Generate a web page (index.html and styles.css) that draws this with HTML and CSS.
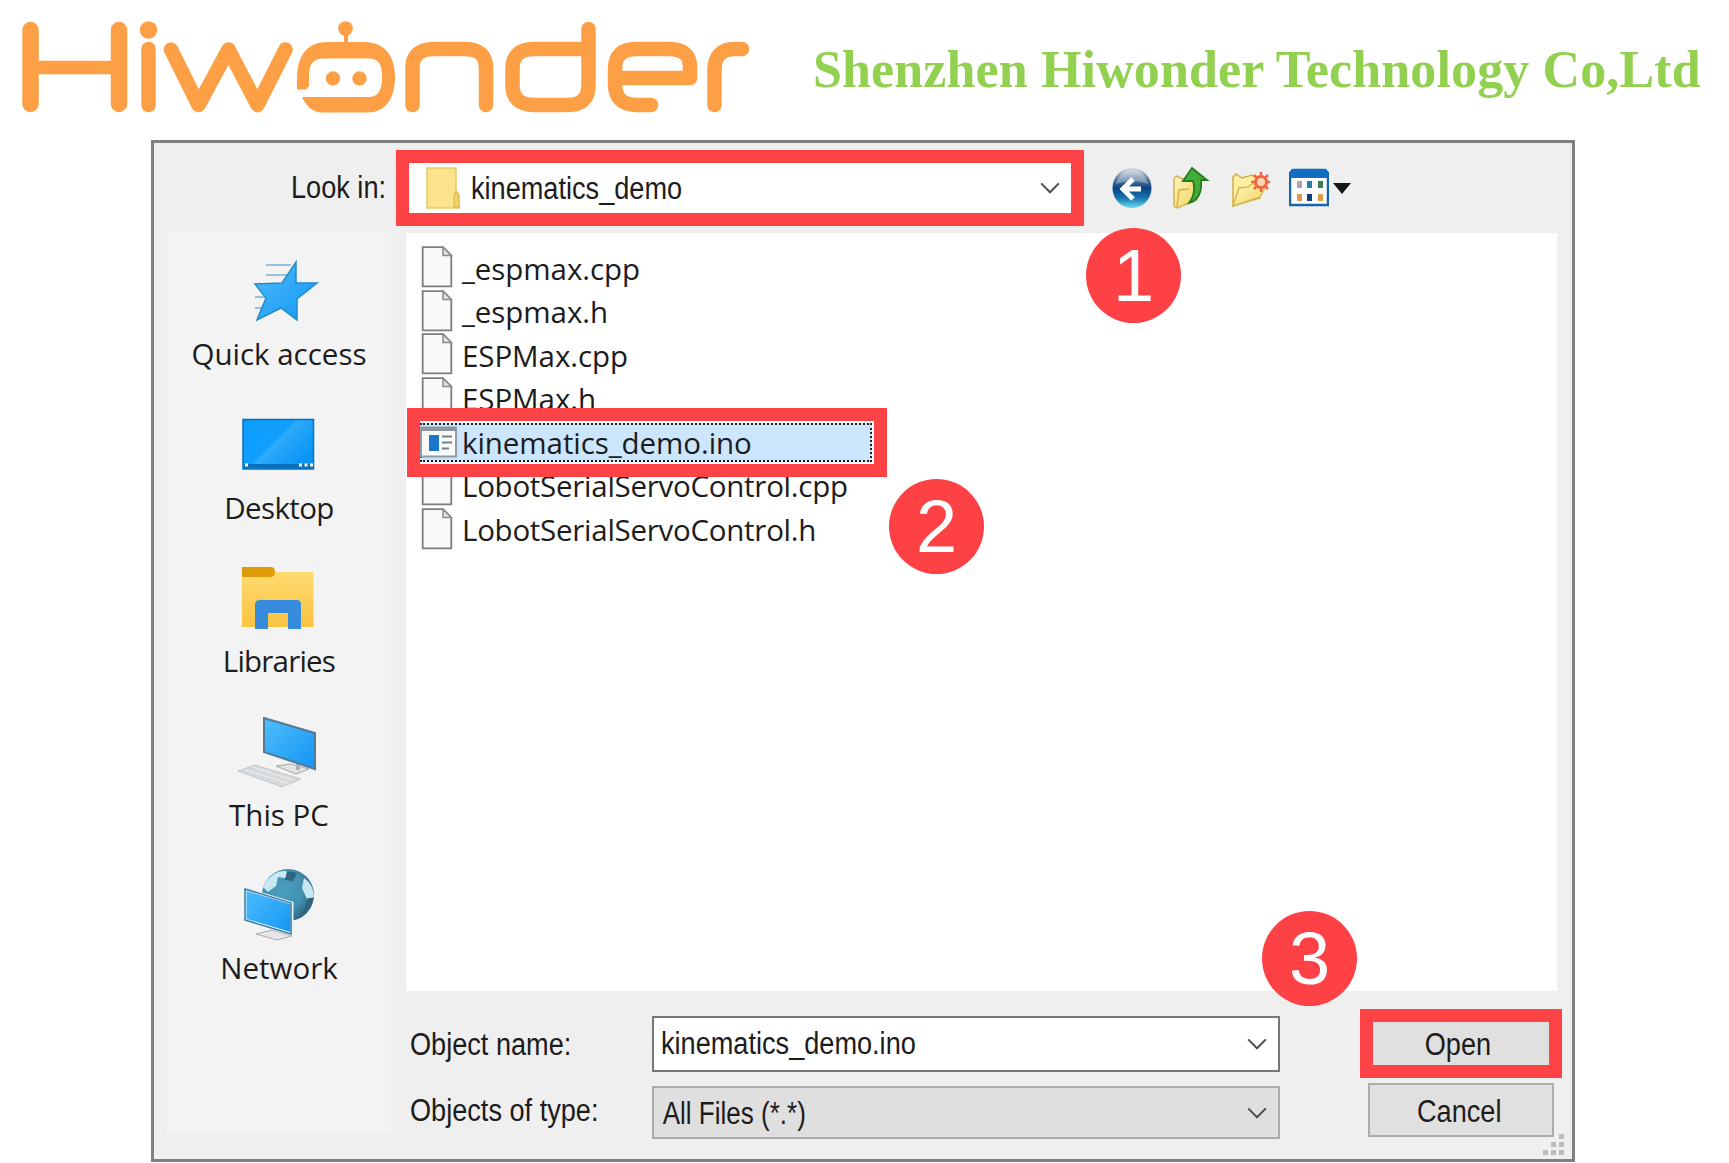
FILE: index.html
```html
<!DOCTYPE html>
<html lang="en">
<head>
<meta charset="utf-8">
<title>Hiwonder - Open sketch</title>
<link rel="stylesheet" href="styles.css">
</head>
<body>
<svg class="defs" width="0" height="0">
  <defs>
    <linearGradient id="blue" x1="0" y1="0" x2="1" y2="1">
      <stop offset="0" stop-color="#50bdfd"/><stop offset="1" stop-color="#1295f2"/>
    </linearGradient>
    <linearGradient id="desk" x1="0" y1="0" x2="1" y2="0.7">
      <stop offset="0" stop-color="#0c9dfa"/><stop offset="0.5" stop-color="#109fff"/><stop offset="0.52" stop-color="#2eabfd"/><stop offset="1" stop-color="#0794f4"/>
    </linearGradient>
    <linearGradient id="gold" x1="0" y1="0" x2="0" y2="1">
      <stop offset="0" stop-color="#ffda70"/><stop offset="1" stop-color="#fac341"/>
    </linearGradient>
    <linearGradient id="paper" x1="0" y1="0" x2="1" y2="1">
      <stop offset="0" stop-color="#fff6bd"/><stop offset="1" stop-color="#f2d45c"/>
    </linearGradient>
    <linearGradient id="ball" x1="0" y1="0" x2="0" y2="1">
      <stop offset="0" stop-color="#d3dce4"/><stop offset="0.3" stop-color="#55779b"/><stop offset="0.5" stop-color="#0c4484"/><stop offset="0.75" stop-color="#1674ad"/><stop offset="1" stop-color="#6fe0f5"/>
    </linearGradient>
    <radialGradient id="globe" cx="0.4" cy="0.4" r="0.65">
      <stop offset="0" stop-color="#4a9fc0"/><stop offset="0.6" stop-color="#4390b0"/><stop offset="1" stop-color="#2d627f"/>
    </radialGradient>
    <symbol id="file" viewBox="0 0 32 42">
      <path d="M1.7 1.2H22L30.3 9.5V40.3H1.7Z" fill="#f9f9f9" stroke="#7d7d7d" stroke-width="1.8"/>
      <path d="M22 1.2V9.5H30.3Z" fill="#e2e2e2" stroke="#8b8b8b" stroke-width="1.5"/>
    </symbol>
    <symbol id="chevron" viewBox="0 0 22 14">
      <path d="M1.5 1.5L11 11L20.5 1.5" fill="none" stroke="#505050" stroke-width="2.2"/>
    </symbol>
  </defs>
</svg>

<header class="brand">
  <svg class="logo" viewBox="0 0 760 140" fill="none" stroke="#fd9f45" stroke-width="14.5" stroke-linecap="round" stroke-linejoin="round">
    <path d="M30.5 30V104M119 30V104" stroke-width="16.5"/>
    <path d="M31 67.5H119" stroke-width="13.5"/>
    <circle cx="148.5" cy="30" r="8.7" fill="#fd9f45" stroke="none"/>
    <path d="M148.5 49V105M171 49.5L198.5 105L228.5 49.5L257.5 105L285.5 49.5"/>
    <path d="M297 89.5V80C297 54 308 42 328 42H364C385 42 395 56 395 77C395 99 385 112.500 368 112.500H322C313 112.500 306 106 302 97H369C379 97 382 89 382 77C382 65 379 58.500 369 58.500H324C312 58.500 309 65 309 77V86L306 89.500Z" fill="#fd9f45" stroke="none"/>
    <path d="M346 30V44" stroke-width="4" stroke-linecap="butt"/>
    <circle cx="345.500" cy="28.500" r="7.300" fill="#fd9f45" stroke="none"/>
    <circle cx="333" cy="78.500" r="7.200" fill="#fd9f45" stroke="none"/>
    <circle cx="359.500" cy="78.500" r="7.200" fill="#fd9f45" stroke="none"/>
    <path d="M412.500 105V68Q412.500 49 434 49H465Q486 49 486 68V105"/>
    <path d="M588.500 29V85Q588.500 105 568 105H534Q512.500 105 512.500 85V69Q512.500 49 534 49H588"/>
    <path d="M651 105H637Q615 105 615 84V69Q615 49 636 49H669Q690 49 690 67V78H616"/>
    <path d="M714.500 105V70Q714.500 49 735 49H742"/>
  </svg>
  <h1 class="company">Shenzhen Hiwonder Technology Co,Ltd</h1>
</header>

<main class="dialog">
  <div class="topbar">
    <div class="look"><span class="sq">Look in:</span></div>
    <div class="combo">
      <svg class="folder" viewBox="0 0 34 42"><path d="M1 1H30V24L33 28V41H1Z" fill="#fbe28c" stroke="#ecc95e" stroke-width="1.500"/><path d="M28 40V29L30 24L33 29V41Z" fill="#f3d169" stroke="#d9b64a"/></svg>
      <span class="sq">kinematics_demo</span>
      <svg class="chev"><use href="#chevron"/></svg>
    </div>
    <div class="tools">
      <svg class="tool" viewBox="0 0 40 42"><ellipse cx="20" cy="21" rx="19.500" ry="20" fill="url(#ball)"/><path d="M4 17Q8 3 20 3T36 17Q20 11 4 17Z" fill="#fff" opacity=".3"/><path d="M21 12L11 22L21 32M12 22H29" fill="none" stroke="#fff" stroke-width="5"/></svg>
      <svg class="tool" viewBox="0 0 40 42"><path d="M3 11L6 9L11 12L26 8V33L6 41L3 39Z" fill="url(#paper)" stroke="#d2b354" stroke-width="1.500"/><path d="M6 40L8 23L18 22" fill="none" stroke="#d5b34b" stroke-width="1.500"/><path d="M21 1L36 13H30C31 24 28 33 18 36C24 28 24 21 22 14H12Z" fill="#45ac37" stroke="#207b22" stroke-width="1.800"/></svg>
      <svg class="tool" viewBox="0 0 40 42"><path d="M3 39V10L6 7L12 11L22 8L30 13V31Z" fill="#fff0a1" stroke="#d1ad4a" stroke-width="1.500"/><path d="M3 39L9 21L18 20L22 17H37L30 30Z" fill="url(#paper)" stroke="#d8b950" stroke-width="1.500"/><circle cx="31" cy="15" r="5.500" fill="#ffd6b4" stroke="#ef6642" stroke-width="3"/><path d="M31 5V9M31 21V25M21 15H25M37 15H40M24 8L27 11M35 19L38 22M38 8L35 11M24 22L27 19" stroke="#ef6642" stroke-width="2.500"/></svg>
      <svg class="tool" viewBox="0 0 40 42"><path d="M4 3H36L39 6V38H1V6Z" fill="#fff" stroke="#1664ad" stroke-width="2.500"/><path d="M3 2H37L39 5V11H1V5Z" fill="#146dc5"/><path d="M8 14H13V21H8Z" fill="#ba9eb0"/><path d="M18 14H23V21H18Z" fill="#237eac"/><path d="M29 14H34V21H29Z" fill="#348052"/><path d="M8 27H13V34H8ZM29 27H34V34H29Z" fill="#df9b4b"/><path d="M18 27H23V34H18Z" fill="#123f78"/></svg>
      <svg class="drop" viewBox="0 0 18 11"><path d="M0 0H18L9 11Z" fill="#161616"/></svg>
    </div>
  </div>

  <div class="body">
    <nav class="places">
      <div class="place">
        <svg viewBox="0 0 100 80"><path d="M37 11H62M37 21H58M26 43H40M26 54H38" stroke="#78b2dc" stroke-width="1.500"/><path d="M67 8V29H88L68 45V66L52 54L28 66L37 44L26 30L53 29Z" fill="url(#blue)" stroke="#238bc6" stroke-width="1.500"/></svg>
        <span>Quick access</span>
      </div>
      <div class="place">
        <svg viewBox="0 0 100 80"><path d="M14 11.500H84.500V61H14Z" fill="url(#desk)" stroke="#0870bd" stroke-width="1.500"/><path d="M15 56H84V60H15Z" fill="#0870bb"/><path d="M16 57H19M70 57H73M75.500 57H78.500M81 57H84" stroke="#fff" stroke-width="3"/></svg>
        <span class="snug">Desktop</span>
      </div>
      <div class="place">
        <svg viewBox="0 0 100 80"><path d="M13 11H84.500V66H13Z" fill="url(#gold)"/><path d="M13 6H42Q46 6 46 11T41 16H13Z" fill="#de9b08"/><path d="M26 68V44Q26 39 31 39H68Q72 39 72 44V68H59V52H39V68Z" fill="#368bdc"/></svg>
        <span class="tight">Libraries</span>
      </div>
      <div class="place">
        <svg viewBox="0 0 100 80"><path d="M9 56L26 50L72 64L53 72Z" fill="#d6dadd" stroke="#c1c7cb"/><path d="M16 55L58 68M23 52L64 65" stroke="#eee"/><path d="M47 51L62 49L80 54L67 59Z" fill="#e3e3e3" stroke="#a5a5a5"/><path d="M69 44V55" stroke="#9bb7c6" stroke-width="4"/><path d="M35 3L86 18V54L35 37Z" fill="url(#blue)" stroke="#547991" stroke-width="2"/></svg>
        <span>This PC</span>
      </div>
      <div class="place">
        <svg viewBox="0 0 100 80"><circle cx="59" cy="27" r="26" fill="url(#globe)"/><path d="M38 12Q49 0 61 4L56 10L49 9L47 18L39 24L34 19ZM75 10Q85 17 85 29L78 31L73 20Z" fill="#c9e9f2"/><path d="M58 3L68 5L64 13L56 12ZM79 30L84 30Q82 42 73 48Z" fill="#31647d"/><path d="M27 66L43 62L63 68L48 72Z" fill="#e7e7e7" stroke="#aaa"/><path d="M16 21L63 35V66L16 52Z" fill="url(#blue)" stroke="#dff5fb" stroke-width="3"/><path d="M16 21L62 35V66L16 52Z" fill="none" stroke="#477a9c" stroke-width="1.500"/></svg>
        <span>Network</span>
      </div>
    </nav>

    <div class="content">
      <ul class="files">
        <li><svg class="doc"><use href="#file"/></svg><span>_espmax.cpp</span></li>
        <li><svg class="doc"><use href="#file"/></svg><span>_espmax.h</span></li>
        <li><svg class="doc"><use href="#file"/></svg><span>ESPMax.cpp</span></li>
        <li><svg class="doc"><use href="#file"/></svg><span>ESPMax.h</span></li>
        <li class="selected">
          <div class="highlight"></div>
          <svg class="ino" viewBox="0 0 38 32"><path d="M1 1.500H36V30.500H1Z" fill="#fafafa" stroke="#929aa2" stroke-width="2"/><path d="M1 1H36V5H1Z" fill="#8e969e"/><path d="M9 9H19V25H9Z" fill="#1976c9"/><path d="M22 10.500H32M22 16.500H32M22 22.500H29" stroke="#737f89" stroke-width="2"/></svg>
          <span>kinematics_demo.ino</span>
        </li>
        <li><svg class="doc"><use href="#file"/></svg><span class="long">LobotSerialServoControl.cpp</span></li>
        <li><svg class="doc"><use href="#file"/></svg><span class="long">LobotSerialServoControl.h</span></li>
      </ul>
      <div class="form">
        <div class="row">
          <label class="label"><span class="sq">Object name:</span></label>
          <div class="field"><span class="sq">kinematics_demo.ino</span><svg class="chev"><use href="#chevron"/></svg></div>
          <button class="btn open"><span class="sq mid">Open</span></button>
        </div>
        <div class="row second">
          <label class="label"><span class="sq">Objects of type:</span></label>
          <div class="field type"><span class="sq">All Files (*.*)</span><svg class="chev"><use href="#chevron"/></svg></div>
          <button class="btn cancel"><span class="sq mid">Cancel</span></button>
        </div>
      </div>
    </div>
  </div>
  <svg class="grip" viewBox="0 0 21 21" fill="#bdbdbd"><path d="M16 0h5v5h-5zM8 8h5v5h-5zM16 8h5v5h-5zM0 16h5v5h-5zM8 16h5v5h-5zM16 16h5v5h-5z"/></svg>
  <div class="badge one">1</div>
  <div class="badge two">2</div>
  <div class="badge three">3</div>
</main>
</body>
</html>
```

FILE: styles.css
```css
* { box-sizing: border-box; }

body {
  margin: 0;
  width: 1729px;
  height: 1163px;
  overflow: hidden;
  background: #fff;
  color: #1c1c1c;
  font-family: "Liberation Sans", Arial, sans-serif;
  font-size: 31px;
}

.defs { display: block; }

.brand {
  display: flex;
  height: 140px;
}

.logo { width: 760px; height: 140px; }

.company {
  margin: 40px 0 0 53px;
  font: bold 52px/60px "Liberation Serif", "Times New Roman", serif;
  letter-spacing: .13px;
  color: #92d050;
  white-space: nowrap;
}

.dialog {
  position: relative;
  width: 1424px;
  height: 1022px;
  margin-left: 151px;
  border: 3px solid #808080;
  background: #efefef;
}

.sq {
  display: inline-block;
  transform: scaleX(.875);
  transform-origin: left center;
  white-space: nowrap;
  line-height: 36px;
}
.sq.mid { transform-origin: center; }

.topbar {
  display: flex;
  align-items: flex-start;
  height: 90px;
  padding-top: 7px;
}

.look {
  width: 242px;
  height: 76px;
  padding: 20px 0 0 137px;
  white-space: nowrap;
}

.combo {
  display: flex;
  align-items: center;
  width: 688px;
  height: 76px;
  padding: 0 10px 0 17px;
  border: 13px solid #fd4345;
  background: #fff;
}

.folder { width: 34px; height: 42px; margin-right: 11px; }
.combo .sq { padding-top: 1px; }
.chev { width: 22px; height: 14px; margin-left: auto; padding-top: 1px; }

.tools {
  display: flex;
  align-items: center;
  gap: 19px;
  height: 76px;
  margin-left: 28px;
}
.tool { width: 40px; height: 42px; }
.drop { width: 18px; height: 11px; margin-left: -15px; }

.body { display: flex; height: 926px; }

.places {
  display: flex;
  flex-direction: column;
  align-items: center;
  gap: 35.5px;
  width: 224px;
  height: 900px;
  margin-left: 13px;
  padding-top: 21px;
  background: #f3f3f3;
}

.place {
  display: flex;
  flex-direction: column;
  align-items: center;
  height: 118px;
  font: 29.5px/39px "Open Sans", "Noto Sans", sans-serif;
  white-space: nowrap;
}
.place svg { width: 100px; height: 80px; flex: none; }
.snug { letter-spacing: -.6px; }
.tight { letter-spacing: -.8px; }

.content { width: 1151px; margin-left: 15px; }

.files {
  height: 758px;
  margin: 0;
  padding: 12.5px 0 0 15px;
  background: #fff;
  list-style: none;
  font: 29.5px/43.6px "Open Sans", "Noto Sans", sans-serif;
  letter-spacing: -.07px;
}

.files li {
  position: relative;
  display: flex;
  align-items: center;
  height: 43.6px;
}
.files span { position: relative; padding-top: 2px; white-space: nowrap; }
.files .long { letter-spacing: -.27px; }
.doc { width: 32px; height: 42px; margin-right: 9px; }
.files .selected { z-index: 1; }
.ino { position: relative; width: 38px; height: 32px; margin: 0 4px 0 -1px; }

.highlight {
  position: absolute;
  left: -14px;
  top: -12px;
  width: 480px;
  height: 69px;
  border: 13px solid #fd4345;
  background: #fff;
}
.highlight::before {
  content: "";
  position: absolute;
  inset: 2px 2px 2px 0;
  border: 2px dotted #222;
  background: #cce6fd;
}

.form { padding: 18px 0 0 2px; }
.row { display: flex; align-items: center; height: 69px; }
.row.second { height: 54px; margin-top: 5px; align-items: flex-start; }
.label { width: 244px; flex: none; padding: 2px 0 0 2px; }
.second .label { padding-top: 10px; }

.field {
  display: flex;
  align-items: center;
  flex: none;
  width: 628px;
  height: 56px;
  padding: 1px 10px 0 7px;
  border: 2px solid #777;
  background: #fff;
}
.field.type {
  height: 53px;
  margin-top: 3px;
  border-color: #aaa;
  background: #dfdfdf;
}
.type .sq { transform: scaleX(.84); padding: 2px 0 0 2px; }

.btn {
  flex: none;
  padding: 0;
  font: inherit;
  color: inherit;
  background: #e0e0e0;
  text-align: center;
}
.open { width: 202px; height: 69px; margin-left: 80px; padding: 2px 6px 0 0; border: 13px solid #fd4345; }
.cancel { width: 186px; height: 54px; margin-left: 88px; padding: 3px 4px 0 0; border: 2px solid #adadad; }

.grip {
  position: absolute;
  right: 8px;
  bottom: 4px;
  width: 21px;
  height: 21px;
}

.badge {
  position: absolute;
  z-index: 2;
  width: 95px;
  height: 95px;
  border-radius: 50%;
  background: #fd4145;
  color: #fff;
  font-size: 74px;
  line-height: 95px;
  text-align: center;
}
.one { left: 932px; top: 85px; }
.two { left: 735px; top: 336px; }
.three { left: 1108px; top: 768px; }
```
